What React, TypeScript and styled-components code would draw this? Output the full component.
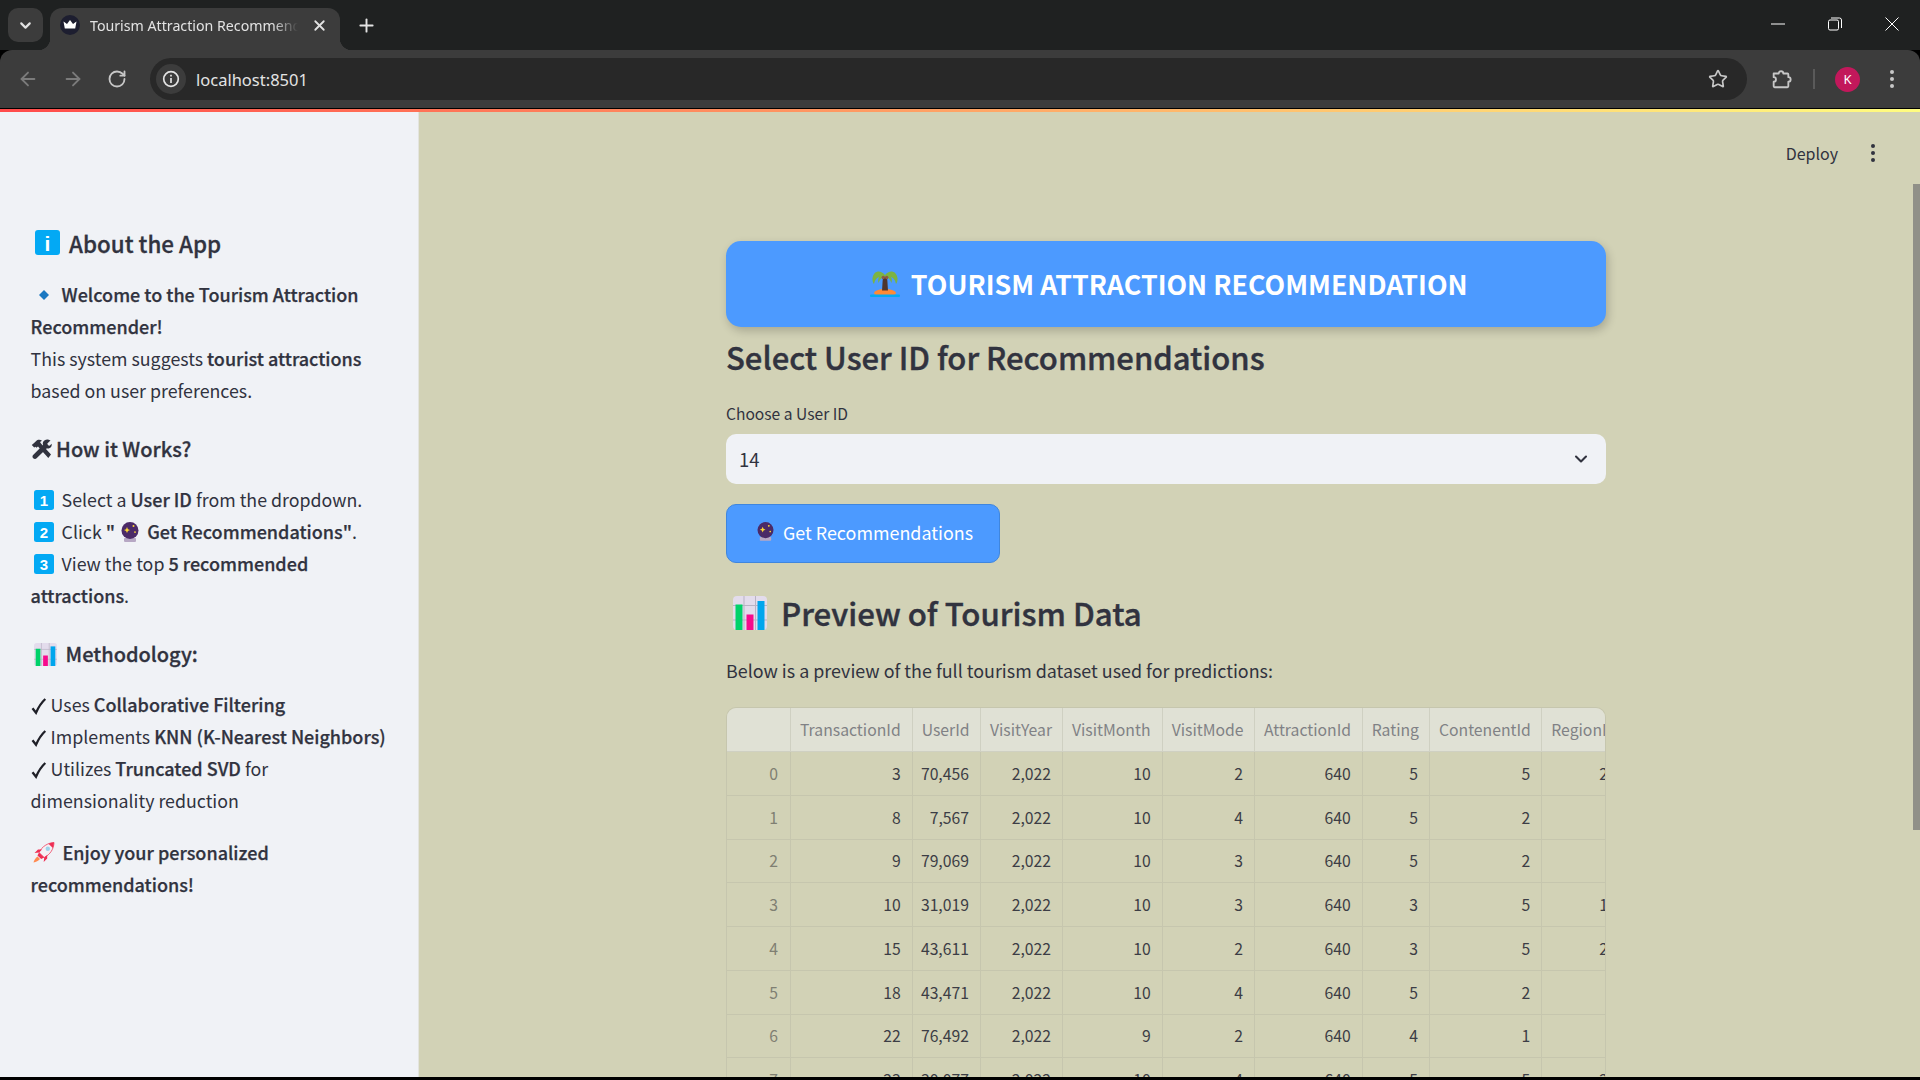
import React from "react";
import styled, { createGlobalStyle } from "styled-components";
import { ArrowLeft, ArrowRight, ChevronDown, Plus, RotateCw, Star, X } from "lucide-react";

const Global = createGlobalStyle`
  html, body { margin: 0; padding: 0; height: 100%; overflow: hidden; background: #000; }
  * { box-sizing: border-box; }
  #root { height: 100%; }
`;

const SANS = `"Noto Sans CJK SC", "Noto Sans", sans-serif`;
const UI = `"Noto Sans", "Open Sans", sans-serif`;

const Screen = styled.div`
  width: 1920px; height: 1077px; display: flex; flex-direction: column; overflow: hidden;
  font-family: ${SANS}; color: #31333f;
`;
const TabStrip = styled.div`
  height: 50px; flex: none; background: #1f2121; display: flex; align-items: flex-end; position: relative; padding-left: 8px;
`;
const TabSearch = styled.div`
  width: 35px; height: 34px; margin-bottom: 8px; border-radius: 10px; background: #3c3c3c; color: #e3e3e3;
  display: flex; align-items: center; justify-content: center;
`;
const Tab = styled.div`
  width: 290px; height: 42px; margin-left: 7px; background: #3c3c3c; border-radius: 12px 12px 0 0; position: relative;
  display: flex; align-items: center; padding: 0 10px 8px 10px; color: #e3e3e3;
  &::before, &::after { content: ""; position: absolute; bottom: 0; width: 12px; height: 12px; }
  &::before { left: -12px; background: radial-gradient(circle at 0 0, transparent 12px, #3c3c3c 12.5px); }
  &::after { right: -12px; background: radial-gradient(circle at 100% 0, transparent 12px, #3c3c3c 12.5px); }
`;
const TabTitle = styled.span`
  font-family: ${UI}; font-size: 14.200px; width: 208px; margin-left: 10px; white-space: nowrap; overflow: hidden;
  mask-image: linear-gradient(to right, #000 88%, transparent 100%);
`;
const TabClose = styled.span`
  margin-left: 13px; display: flex; color: #e3e3e3;
`;
const NewTab = styled.span`
  margin: 0 0 14px 16px; display: flex; color: #e3e3e3;
`;
const WindowControls = styled.div`
  margin-left: auto; height: 50px; display: flex; align-items: center; color: #fff;
`;
const WindowButton = styled.span`
  width: 57px; display: flex; justify-content: center; padding-bottom: 2px;
`;
const Toolbar = styled.div`
  height: 58px; flex: none; background: #3c3c3c; border-radius: 12px 12px 0 0; display: flex; align-items: center;
  padding-left: 17px; position: relative; color: #c7c7c7;
`;
const NavButton = styled.span<{ $dim?: boolean }>`
  width: 45px; display: flex; justify-content: flex-start; color: ${(p) => (p.$dim ? "#7b7b7b" : "#c7c7c7")};
`;
const Omnibox = styled.div`
  width: 1597px; height: 42px; margin-left: -2px; border-radius: 21px; background: #282828; display: flex; align-items: center; padding: 0 19px 0 6px;
`;
const SiteInfo = styled.span`
  width: 30px; height: 30px; border-radius: 50%; background: #3c3c3c; display: flex; align-items: center; justify-content: center; color: #e3e3e3;
`;
const Url = styled.span`
  font-family: ${UI}; font-size: 16.500px; color: #e3e3e3; margin-left: 10px;
`;
const StarSlot = styled.span`
  margin-left: auto; display: flex; color: #c7c7c7;
`;
const ExtSlot = styled.span`
  margin-left: 23px; display: flex;
`;
const ToolbarSep = styled.span`
  width: 2px; height: 20px; background: #5a5a5a; margin-left: 21px;
`;
const Avatar = styled.span`
  width: 25px; height: 25px; border-radius: 50%; background: #c2185b; color: #fff; font-family: ${UI}; font-size: 13px;
  display: flex; align-items: center; justify-content: center; margin-left: 20px;
`;
const MenuSlot = styled.span`
  margin-left: 29px; display: flex;
`;
const Rainbow = styled.div`
  height: 3.500px; flex: none; margin-top: 0.500px; background: linear-gradient(90deg, #ff4b4b, #fffd80);
`;
const Page = styled.div`
  flex: 1; min-height: 0; display: flex; position: relative; overflow: hidden;
`;
const Sidebar = styled.aside`
  width: 419px; flex: none; background: #f0f2f6; padding: 113.500px 30px 0 30.600px; font-size: 17.800px; line-height: 32px; border-right: 1px solid #e3e4de;
`;
const SideTitle = styled.h3`
  margin: 0 0 18px 4.400px; font-size: 22.400px; line-height: 34px; font-weight: 500; -webkit-text-stroke: 0.300px currentColor; display: flex; align-items: center; gap: 9px;
`;
const SideHeading = styled.h4`
  margin: 25.300px 0 16px; font-size: 20px; line-height: 36px; font-weight: 500; -webkit-text-stroke: 0.300px currentColor; display: flex; align-items: center;
`;
const SideText = styled.p`
  margin: 0 0 20px; white-space: nowrap;
`;
const Strong = styled.strong`
  font-weight: 500; font-size: 18px; line-height: 1; -webkit-text-stroke: 0.250px currentColor;
`;
const Emoji = styled.span<{ $inset?: number }>`
  display: inline-flex; vertical-align: -3px; line-height: 1; margin-left: ${(p) => p.$inset ?? 0}px;
`;
const ToolsSlot = styled.span`
  display: flex; margin-right: 4.500px;
`;
const ChartSlot = styled.span`
  display: flex; margin: 0 9px 0 3px;
`;
const Main = styled.main`
  flex: 1; min-width: 0; background: #d2d2b6; display: flex; padding: 129px 0 0 307px; position: relative;
`;
const Content = styled.div`
  width: 879.500px; flex: none;
`;
const Banner = styled.div`
  height: 86px; background: #4c9aff; border-radius: 15px; box-shadow: 2px 4px 10px rgba(0, 0, 0, 0.2); color: #fff; padding: 0 0 2px 6px;
  font-size: 26.800px; font-weight: 700; display: flex; align-items: center; justify-content: center; gap: 11px;
`;
const PageHeading = styled.h2`
  margin: 5px 0 0; font-size: 31px; line-height: 50px; font-weight: 500; -webkit-text-stroke: 0.400px currentColor;
`;
const FieldLabel = styled.label`
  display: block; margin-top: 17px; font-size: 15.600px; line-height: 28px;
`;
const Select = styled.div`
  height: 50px; margin-top: 7px; background: #f0f2f6; border-radius: 10px; padding: 0 15px 1px 13px; font-size: 18.500px; display: flex; align-items: center; justify-content: space-between;
`;
const Button = styled.button`
  display: flex; align-items: center; gap: 9px; width: 274px; height: 59px; margin-top: 20px; padding: 0 0 3px 30px; background: #4c9aff; border: 1px solid #3f86de; border-radius: 10px;
  color: #fff; font-family: ${SANS}; font-size: 17.900px;
`;
const SectionHeading = styled.h2`
  margin: 28px 0 0 7px; font-size: 31.200px; line-height: 44px; font-weight: 500; -webkit-text-stroke: 0.400px currentColor; display: flex; align-items: center; gap: 14px;
`;
const Lead = styled.p`
  margin: 18.500px 0 0; font-size: 17.900px; line-height: 32px;
`;
const TableFrame = styled.div`
  margin-top: 21px; width: 879.500px; overflow: hidden; border-radius: 10px 10px 0 0; border: 1px solid #c6c6ae; border-bottom: 0;
`;
const DataTable = styled.table`
  border-collapse: collapse; table-layout: fixed; width: 900.800px; font-size: 15.750px; color: #3c3d45;
`;
const HeadCell = styled.th`
  height: 44px; padding: 0 9px; background: #e0e1d5; color: #808185; font-weight: 400; text-align: left; white-space: nowrap; overflow: hidden;
  border-right: 1px solid #cfd0c2; border-bottom: 1px solid #cfd0c2;
  &:last-child { border-right: 0; }
`;
const IndexCell = styled.td`
  height: 43.750px; padding: 0 12px 0 0; color: #7f7f72; text-align: right; border-right: 1px solid #c6c6ae; border-bottom: 1px solid #c6c6ae;
`;
const ValueCell = styled.td`
  height: 43.750px; padding: 0 11px 0 0; text-align: right; border-right: 1px solid #c6c6ae; border-bottom: 1px solid #c6c6ae;
  &:last-child { border-right: 0; }
`;
const DeployBar = styled.div`
  position: absolute; top: 28px; right: 0; display: flex; align-items: center; font-size: 16px; line-height: 26px;
`;
const DeployLabel = styled.span`
  margin-right: 32px;
`;
const DeployMenu = styled.span`
  display: flex; margin-right: 44px;
`;
const ScrollThumb = styled.div`
  position: absolute; top: 72px; right: 0; width: 7px; height: 646px; background: #909088;
`;

const Crown = () => (
  <svg width="20" height="20" viewBox="0 0 20 20">
    <circle cx="10" cy="10" r="10" fill="#1d1e30" />
    <path d="M3.500 6.500 7 9l3-4 3 4 3.500-2.500-1.300 7H4.800z" fill="#fff" />
  </svg>
);
const InfoCircle = () => (
  <svg width="18" height="18" viewBox="0 0 18 18" fill="none" stroke="currentColor" strokeWidth="1.700">
    <circle cx="9" cy="9" r="7.300" />
    <path d="M9 8v5" />
    <path d="M9 4.700v1.800" />
  </svg>
);
const Puzzle = () => (
  <svg width="22" height="22" viewBox="0 0 24 24" fill="none" stroke="#c7c7c7" strokeWidth="2" strokeLinejoin="round">
    <path d="M4 6h5.500a2.500 2.500 0 0 1 5 0H19a1 1 0 0 1 1 1v3a2.500 2.500 0 0 1 0 5v5a1 1 0 0 1-1 1H5a1 1 0 0 1-1-1v-5a2.500 2.500 0 0 0 0-5z" />
  </svg>
);
const Dots = ({ color }: { color: string }) => (
  <svg width="6" height="20" viewBox="0 0 6 20" fill={color}>
    <circle cx="3" cy="3" r="2" />
    <circle cx="3" cy="10" r="2" />
    <circle cx="3" cy="17" r="2" />
  </svg>
);
const InfoEmoji = () => (
  <svg width="25" height="25" viewBox="0 0 25 25">
    <rect width="25" height="25" rx="3" fill="#03a9f4" />
    <text x="12.500" y="20.500" fontSize="21" fontWeight="700" fill="#fff" textAnchor="middle" fontFamily="Liberation Sans, sans-serif">i</text>
  </svg>
);
const Diamond = () => (
  <svg width="27" height="20" viewBox="0 0 27 20">
    <path d="M13 5l5 5-5 5-5-5z" fill="#1a78c2" />
  </svg>
);
const Tools = () => (
  <svg width="21" height="20" viewBox="0 0 21 20" fill="#31333f">
    <path d="M2.500 4.500 6 1.200c1.800-.8 3.600-.6 5 .5l-2 1.400 1.200 1.600L20 15.600 17.300 19 7 7.600 5.300 8.800 4.600 7.800 3.200 8.500 0.800 6z" />
    <path d="M19.500 1.500 16.300 4.600 17 6.300 18.600 6.800 20.600 4.700c.5 2-.5 4-2.400 4.600-.9.300-1.600.200-2.300-.1L5.600 19.300c-.9.900-2.500.8-3.400-.1-.9-.9-1-2.400-.1-3.300l10-10c-.4-.9-.4-1.900 0-2.800.8-1.900 2.900-3 4.900-2.600z" />
  </svg>
);
const Key = ({ n }: { n: string }) => (
  <svg width="20" height="20" viewBox="0 0 20 20">
    <rect width="20" height="20" rx="2.500" fill="#03a9f4" />
    <text x="10" y="15.500" fontSize="15" fontWeight="700" fill="#fff" textAnchor="middle" fontFamily="Liberation Sans, sans-serif">{n}</text>
  </svg>
);
const CrystalBall = ({ size }: { size: number }) => (
  <svg width={size} height={size * 1.120} viewBox="0 0 18 20">
    <rect x="3" y="15.800" width="12" height="4" rx="0.800" fill="#b7a8c4" />
    <circle cx="9" cy="8.500" r="8.500" fill="#4b2a67" />
    <path d="M6 5l.9 2.100L9 8 6.900 8.900 6 11l-.9-2.100L3 8l2.100-.9z" fill="#fdd835" />
    <circle cx="12.500" cy="4" r="1" fill="#fdd835" />
    <circle cx="14" cy="10" r="0.900" fill="#fdd835" />
  </svg>
);
const Chart = ({ size }: { size: number }) => (
  <svg width={size} height={size} viewBox="0 0 34 34">
    <rect width="34" height="34" rx="4" fill="#e3dcec" />
    <path d="M0 9.500h34M0 24h34M11 0v34M22.500 0v34" stroke="#b9b3c4" strokeWidth="1" />
    <rect x="2.500" y="8.500" width="7" height="25.500" fill="#00d26a" />
    <rect x="13.500" y="18.500" width="7" height="15.500" fill="#f70a8d" />
    <rect x="24.500" y="5" width="7" height="29" fill="#00a6ed" />
  </svg>
);
const LEAF = "M15 5C11 0 4 0 2.500 8 2.200 10 3 13 4 14 5 10 6 8 9 7 8 9 8 11 8.500 13 10 9 12 7 15 7z";
const Palm = () => (
  <svg width="30" height="27" viewBox="0 0 30 27">
    <ellipse cx="15" cy="23" rx="11" ry="4" fill="#ff8a34" />
    <rect y="24.500" width="30" height="2.500" rx="1" fill="#03a9f4" />
    <path d="M13 6h4l1 14.500h-6z" fill="#4e342e" />
    <path d={LEAF} fill="#7cb342" />
    <path d={LEAF} fill="#7cb342" transform="matrix(-1 0 0 1 30 0)" />
    <circle cx="13.300" cy="7.500" r="1.700" fill="#8d5a44" />
    <circle cx="16.700" cy="7.500" r="1.700" fill="#8d5a44" />
  </svg>
);
const Rocket = () => (
  <svg width="22" height="21" viewBox="0 0 22 21">
    <path d="M6 10.500C9 4.500 14.500 1 21 0.500c-.2 6.500-3.800 12-9.800 15z" fill="#f4f0f4" stroke="#ef3e5c" strokeWidth="0.800" />
    <path d="M21 0.500c-.1 2-.5 3.800-1.200 5.500L15.500 1.700c1.700-.7 3.500-1.100 5.500-1.200z" fill="#ef2f54" />
    <circle cx="14.800" cy="6.700" r="2.200" fill="#9fd3ea" />
    <path d="M6 10.500 1.500 11 5 7.500h4zM11.200 15.500l-.5 4.500 3.500-3.500v-3.500z" fill="#ef2f54" />
    <path d="M4.500 14.500l2.500 2.500c-1.500 2-4 3-6.500 3.500.5-2.500 2-4.500 4-6z" fill="#ff8a50" />
    <path d="M6 10.500l5.200 5-3 1.500-3.700-3.500z" fill="#ef2f54" />
  </svg>
);
const Check = () => (
  <svg width="16" height="17" viewBox="0 0 16 17" fill="none">
    <path d="M1.500 10.200 5 14.700C7.300 9.500 10 5 14.300 1" stroke="#1f2028" strokeWidth="2.300" />
  </svg>
);

const heads = ["TransactionId", "UserId", "VisitYear", "VisitMonth", "VisitMode", "AttractionId", "Rating", "ContenentId", "RegionId"];
const widths = [63.500, 121.700, 68.300, 82, 99.700, 92.300, 107.700, 67.300, 112.300, 86];
const rows = [
  ["3", "70,456", "2,022", "10", "2", "640", "5", "5", "22"],
  ["8", "7,567", "2,022", "10", "4", "640", "5", "2", "8"],
  ["9", "79,069", "2,022", "10", "3", "640", "5", "2", "8"],
  ["10", "31,019", "2,022", "10", "3", "640", "3", "5", "13"],
  ["15", "43,611", "2,022", "10", "2", "640", "3", "5", "22"],
  ["18", "43,471", "2,022", "10", "4", "640", "5", "2", "8"],
  ["22", "76,492", "2,022", "9", "2", "640", "4", "1", "8"],
  ["23", "30,077", "2,022", "10", "4", "640", "5", "5", "22"],
];

export default function App() {
  return (
    <Screen>
      <Global />
      <TabStrip>
        <TabSearch><ChevronDown size={17} strokeWidth={3} /></TabSearch>
        <Tab>
          <Crown />
          <TabTitle>Tourism Attraction Recommender</TabTitle>
          <TabClose><X size={17} strokeWidth={2.500} /></TabClose>
        </Tab>
        <NewTab><Plus size={21} strokeWidth={2.200} /></NewTab>
        <WindowControls>
          <WindowButton>
            <svg width="14" height="14" viewBox="0 0 14 14"><path d="M0 7h14" stroke="#fff" strokeWidth="1" /></svg>
          </WindowButton>
          <WindowButton>
            <svg width="14" height="14" viewBox="0 0 14 14" fill="none" stroke="#fff"><rect x="0.500" y="3" width="10" height="10" rx="1.500" /><path d="M3 1h8.500a2 2 0 0 1 2 2v8" /></svg>
          </WindowButton>
          <WindowButton>
            <svg width="14" height="14" viewBox="0 0 14 14" stroke="#fff" strokeWidth="1"><path d="M0.500 0.500l13 13M13.500 0.500l-13 13" /></svg>
          </WindowButton>
        </WindowControls>
      </TabStrip>
      <Toolbar>
        <NavButton $dim><ArrowLeft size={22} /></NavButton>
        <NavButton $dim><ArrowRight size={22} /></NavButton>
        <NavButton><RotateCw size={20} strokeWidth={2.200} /></NavButton>
        <Omnibox>
          <SiteInfo><InfoCircle /></SiteInfo>
          <Url>localhost:8501</Url>
          <StarSlot><Star size={20} strokeWidth={2} /></StarSlot>
        </Omnibox>
        <ExtSlot><Puzzle /></ExtSlot>
        <ToolbarSep />
        <Avatar>K</Avatar>
        <MenuSlot><Dots color="#c7c7c7" /></MenuSlot>
      </Toolbar>
      <Rainbow />
      <Page>
        <Sidebar>
          <SideTitle><InfoEmoji />About the App</SideTitle>
          <SideText>
            <Emoji><Diamond /></Emoji>{" "}<Strong>Welcome to the Tourism Attraction</Strong><br />
            <Strong>Recommender!</Strong><br />
            This system suggests <Strong>tourist attractions</Strong><br />
            based on user preferences.
          </SideText>
          <SideHeading><ToolsSlot><Tools /></ToolsSlot>How it Works?</SideHeading>
          <SideText>
            <Emoji $inset={3}><Key n="1" /></Emoji>&nbsp; Select a <Strong>User ID</Strong> from the dropdown.<br />
            <Emoji $inset={3}><Key n="2" /></Emoji>&nbsp; Click <Strong>" <Emoji $inset={2}><CrystalBall size={18} /></Emoji>&nbsp; Get Recommendations"</Strong>.<br />
            <Emoji $inset={3}><Key n="3" /></Emoji>&nbsp; View the top <Strong>5 recommended</Strong><br />
            <Strong>attractions</Strong>.
          </SideText>
          <SideHeading><ChartSlot><Chart size={23} /></ChartSlot>Methodology:</SideHeading>
          <SideText>
            <Emoji><Check /></Emoji> Uses <Strong>Collaborative Filtering</Strong><br />
            <Emoji><Check /></Emoji> Implements <Strong>KNN (K-Nearest Neighbors)</Strong><br />
            <Emoji><Check /></Emoji> Utilizes <Strong>Truncated SVD</Strong> for<br />
            dimensionality reduction
          </SideText>
          <SideText>
            <Emoji $inset={2}><Rocket /></Emoji>&nbsp; <Strong>Enjoy your personalized</Strong><br />
            <Strong>recommendations!</Strong>
          </SideText>
        </Sidebar>
        <Main>
          <Content>
            <Banner><Palm />TOURISM ATTRACTION RECOMMENDATION</Banner>
            <PageHeading>Select User ID for Recommendations</PageHeading>
            <FieldLabel>Choose a User ID</FieldLabel>
            <Select>14<ChevronDown size={20} strokeWidth={2.500} /></Select>
            <Button><CrystalBall size={17} />Get Recommendations</Button>
            <SectionHeading><Chart size={34} />Preview of Tourism Data</SectionHeading>
            <Lead>Below is a preview of the full tourism dataset used for predictions:</Lead>
            <TableFrame>
              <DataTable>
                <colgroup>
                  {widths.map((w, i) => <col key={i} style={{ width: w }} />)}
                </colgroup>
                <thead>
                  <tr>
                    <HeadCell />
                    {heads.map((h) => <HeadCell key={h}>{h}</HeadCell>)}
                  </tr>
                </thead>
                <tbody>
                  {rows.map((r, i) => (
                    <tr key={i}>
                      <IndexCell>{i}</IndexCell>
                      {r.map((v, j) => <ValueCell key={j}>{v}</ValueCell>)}
                    </tr>
                  ))}
                </tbody>
              </DataTable>
            </TableFrame>
          </Content>
          <DeployBar>
            <DeployLabel>Deploy</DeployLabel>
            <DeployMenu><Dots color="#31333f" /></DeployMenu>
          </DeployBar>
          <ScrollThumb />
        </Main>
      </Page>
    </Screen>
  );
}
